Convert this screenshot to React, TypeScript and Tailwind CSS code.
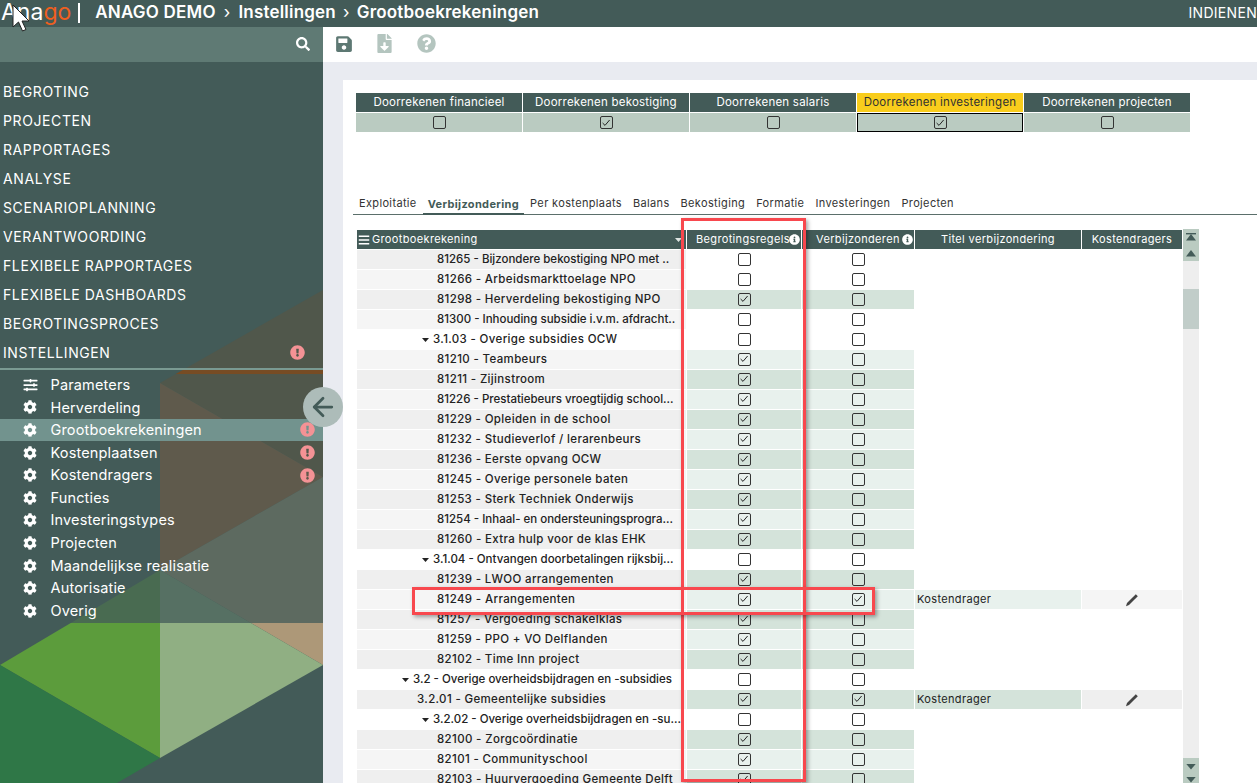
import React from "react";
import { ArrowLeft } from "lucide-react";
import {
  FaBars,
  FaCog,
  FaExclamationCircle,
  FaFileDownload,
  FaInfoCircle,
  FaQuestionCircle,
  FaSave,
  FaSearch,
  FaSlidersH,
} from "react-icons/fa";

const mainNav = [
  "BEGROTING",
  "PROJECTEN",
  "RAPPORTAGES",
  "ANALYSE",
  "SCENARIOPLANNING",
  "VERANTWOORDING",
  "FLEXIBELE RAPPORTAGES",
  "FLEXIBELE DASHBOARDS",
  "BEGROTINGSPROCES",
];

const subNav = [
  { label: "Parameters", sliders: true },
  { label: "Herverdeling" },
  { label: "Grootboekrekeningen", active: true, alert: true },
  { label: "Kostenplaatsen", alert: true },
  { label: "Kostendragers", alert: true },
  { label: "Functies" },
  { label: "Investeringstypes" },
  { label: "Projecten" },
  { label: "Maandelijkse realisatie" },
  { label: "Autorisatie" },
  { label: "Overig" },
];

const calcTabs = [
  { label: "Doorrekenen financieel", checked: false },
  { label: "Doorrekenen bekostiging", checked: true },
  { label: "Doorrekenen salaris", checked: false },
  { label: "Doorrekenen investeringen", checked: true, selected: true },
  { label: "Doorrekenen projecten", checked: false },
];

const tabs = [
  "Exploitatie",
  "Verbijzondering",
  "Per kostenplaats",
  "Balans",
  "Bekostiging",
  "Formatie",
  "Investeringen",
  "Projecten",
];

type Row = {
  label: string;
  indent: string;
  checked?: boolean;
  special?: boolean;
  section?: boolean;
  tight?: boolean;
};

const leaf = "pl-[80px]";

const rows: Row[] = [
  { label: "81265 - Bijzondere bekostiging NPO met ..", indent: leaf, tight: true },
  { label: "81266 - Arbeidsmarkttoelage NPO", indent: leaf },
  { label: "81298 - Herverdeling bekostiging NPO", indent: leaf, checked: true },
  { label: "81300 - Inhouding subsidie i.v.m. afdracht..", indent: leaf, tight: true },
  { label: "3.1.03 - Overige subsidies OCW", indent: "pl-[65px]", section: true },
  { label: "81210 - Teambeurs", indent: leaf, checked: true },
  { label: "81211 - Zijinstroom", indent: leaf, checked: true },
  { label: "81226 - Prestatiebeurs vroegtijdig school...", indent: leaf, checked: true, tight: true },
  { label: "81229 - Opleiden in de school", indent: leaf, checked: true },
  { label: "81232 - Studieverlof / lerarenbeurs", indent: leaf, checked: true },
  { label: "81236 - Eerste opvang OCW", indent: leaf, checked: true },
  { label: "81245 - Overige personele baten", indent: leaf, checked: true },
  { label: "81253 - Sterk Techniek Onderwijs", indent: leaf, checked: true },
  { label: "81254 - Inhaal- en ondersteuningsprogra...", indent: leaf, checked: true, tight: true },
  { label: "81260 - Extra hulp voor de klas EHK", indent: leaf, checked: true },
  { label: "3.1.04 - Ontvangen doorbetalingen rijksbij...", indent: "pl-[65px]", section: true, tight: true },
  { label: "81239 - LWOO arrangementen", indent: leaf, checked: true },
  { label: "81249 - Arrangementen", indent: leaf, checked: true, special: true },
  { label: "81257 - Vergoeding schakelklas", indent: leaf, checked: true },
  { label: "81259 - PPO + VO Delflanden", indent: leaf, checked: true },
  { label: "82102 - Time Inn project", indent: leaf, checked: true },
  { label: "3.2 - Overige overheidsbijdragen en -subsidies", indent: "pl-[45px]", section: true, tight: true },
  { label: "3.2.01 - Gemeentelijke subsidies", indent: "pl-[60px]", checked: true, special: true },
  { label: "3.2.02 - Overige overheidsbijdragen en -su...", indent: "pl-[65px]", section: true, tight: true },
  { label: "82100 - Zorgcoördinatie", indent: leaf, checked: true },
  { label: "82101 - Communityschool", indent: leaf, checked: true },
  { label: "82103 - Huurvergoeding Gemeente Delft", indent: leaf, checked: true },
];

const Checkbox = ({ checked }: { checked?: boolean }) => (
  <span className="flex h-[13px] w-[13px] items-center justify-center rounded-[2px] border-[1.5px] border-[#333]">
    {checked && (
      <svg viewBox="0 0 10 10" className="h-[10px] w-[10px] shrink-0">
        <path d="M1.6 5 L4 7.4 L8.6 2" fill="none" stroke="#222" strokeWidth="1" />
      </svg>
    )}
  </span>
);

const Caret = () => (
  <svg viewBox="0 0 7 4" className="mr-[4px] h-[4px] w-[7px] shrink-0">
    <path d="M0 0 H7 L3.5 4 Z" fill="#222" />
  </svg>
);

const Pencil = () => (
  <svg viewBox="0 0 14 14" className="h-[14px] w-[14px]">
    <path d="M1 13.2 L2 10 L10.8 1.2 L12.8 3.2 L4 12 Z" fill="#444" />
  </svg>
);

const Triangle = ({ down, bar }: { down?: boolean; bar?: boolean }) => (
  <svg viewBox="0 0 10 8" className="h-[8px] w-[10px]">
    {bar && <rect x="0" y="0" width="10" height="1.4" fill="#435b58" />}
    <path d={down ? "M0 1 H10 L5 7 Z" : "M5 1 L10 7.5 H0 Z"} fill="#435b58" />
  </svg>
);

const Sidebar = () => (
  <aside className="relative flex w-[323px] shrink-0 flex-col overflow-hidden bg-[#435b58] text-white">
    <svg viewBox="0 27 323 756" className="absolute inset-0 h-full w-full">
      <path d="M323 290 L160 383 L323 477 Z" fill="#774c24" />
      <path d="M160 383 L323 477 L160 570 Z" fill="#b45828" />
      <path d="M323 477 L160 570 L323 665 Z" fill="#ad9878" />
      <path d="M160 570 L0 665 L160 758 Z" fill="#5c9c3c" />
      <path d="M160 570 L323 665 L160 758 Z" fill="#90af83" />
      <path d="M0 665 L160 758 L117 783 L0 783 Z" fill="#2f7747" />
      <rect x="0" y="27" width="323" height="343" fill="#435b58" fillOpacity="0.75" />
      <rect x="0" y="374" width="323" height="249" fill="#435b58" fillOpacity="0.75" />
    </svg>

    <div className="relative flex h-[35px] shrink-0 items-center justify-end bg-[#5f7a74] pb-[1px] pr-[13px]">
      <FaSearch className="h-[14px] w-[14px]" />
    </div>

    <nav className="relative pt-[15px]">
      {mainNav.map((item) => (
        <div key={item} className="flex h-[29px] items-center pl-[3px] text-[14px] tracking-[0.6px]">
          {item}
        </div>
      ))}
      <div className="flex h-[29px] items-center justify-between pl-[3px] pr-[18px] text-[14px] tracking-[0.6px]">
        INSTELLINGEN
        <FaExclamationCircle className="h-[15px] w-[15px] text-[#f49295]" />
      </div>
      <div className="mt-px h-[2px] bg-[#7a9a92]" />
      <ul className="pt-[3.5px]">
        {subNav.map((item) => (
          <li
            key={item.label}
            className={`flex h-[22.6px] items-center pl-[23px] pr-[8px] text-[14.5px] tracking-[0.15px] ${
              item.active ? "bg-[#72938e]" : ""
            }`}
          >
            <span className="flex w-[27.5px] shrink-0">
              {item.sliders ? (
                <FaSlidersH className="h-[14px] w-[15px]" />
              ) : (
                <FaCog className="h-[14px] w-[14px]" />
              )}
            </span>
            <span className="flex-1">{item.label}</span>
            {item.alert && <FaExclamationCircle className="h-[15px] w-[15px] text-[#f49295]" />}
          </li>
        ))}
      </ul>
    </nav>
  </aside>
);

const DataTable = () => (
  <div className="mt-[15px] flex items-start pl-[1px]">
    <div className="grid grid-cols-[329px_114px_112px_166px_100px] gap-x-px gap-y-px text-[11px] tracking-[0.35px] text-[#222]">
      <div className="flex h-[19px] items-center bg-[#435b58] text-white">
        <FaBars className="ml-[1px] mr-[2px] h-[12px] w-[12px]" />
        <span className="flex-1">Grootboekrekening</span>
        <svg viewBox="0 0 7 4" className="mr-[4px] h-[4px] w-[7px]">
          <path d="M0 0 H7 L3.5 4 Z" fill="#dfe6e3" />
        </svg>
      </div>
      <div className="relative flex h-[19px] items-center bg-[#435b58] pl-[9px] text-white">
        Begrotingsregels
        <FaInfoCircle className="absolute right-[1px] h-[11px] w-[11px]" />
      </div>
      <div className="relative flex h-[19px] items-center bg-[#435b58] pl-[14px] text-white">
        Verbijzonderen
        <FaInfoCircle className="absolute right-[1px] h-[11px] w-[11px]" />
      </div>
      <div className="flex h-[19px] items-center justify-center bg-[#435b58] text-white">
        Titel verbijzondering
      </div>
      <div className="flex h-[19px] items-center justify-center bg-[#435b58] text-white">
        Kostendragers
      </div>

      {rows.map((row, i) => {
        const even = i % 2 === 0;
        const tint = row.checked ? (even ? "bg-[#d4e3da]" : "bg-[#e8f1ed]") : "bg-white";
        const labelBg = row.section ? "bg-white" : even ? "bg-[#efefef]" : "bg-[#f5f5f5]";
        return (
          <React.Fragment key={row.label}>
            <div
              className={`flex h-[19px] items-center overflow-hidden whitespace-nowrap text-[11.5px] font-medium ${
                row.tight ? "tracking-[0px]" : ""
              } ${row.indent} ${labelBg}`}
            >
              {row.section && <Caret />}
              {row.label}
            </div>
            <div className={`flex h-[19px] items-center justify-center pb-[1px] ${tint}`}>
              <Checkbox checked={row.checked} />
            </div>
            <div className={`flex h-[19px] items-center justify-center pb-[1px] ${tint}`}>
              <Checkbox checked={row.special} />
            </div>
            {row.special ? (
              <>
                <div className={`flex h-[19px] items-center pl-[2px] ${tint}`}>Kostendrager</div>
                <div className={`flex h-[19px] items-center justify-center ${even ? "bg-[#efefef]" : "bg-[#f5f5f5]"}`}>
                  <Pencil />
                </div>
              </>
            ) : (
              <>
                <div className="h-[19px]" />
                <div className="h-[19px]" />
              </>
            )}
          </React.Fragment>
        );
      })}
    </div>

    <div className="-mt-px ml-px flex h-[554px] w-[16px] shrink-0 flex-col bg-[#eeeeee]">
      <div className="flex h-[32px] shrink-0 flex-col items-center gap-[8px] bg-[#bacbc1] pt-[4px]">
        <Triangle bar />
        <Triangle />
      </div>
      <div className="mt-[28px] h-[40px] shrink-0 bg-[#c1cdc9]" />
      <div className="mt-auto flex h-[25px] shrink-0 flex-col items-center gap-[5px] bg-[#bacbc1] pt-[5px]">
        <Triangle down />
        <Triangle down />
      </div>
    </div>
  </div>
);

export default function App() {
  return (
    <div className="relative flex h-[783px] w-[1257px] flex-col overflow-hidden bg-white [font-family:Inter,'Liberation_Sans',sans-serif]">
      <header className="flex h-[27px] shrink-0 items-center bg-[#435b58] pb-[2px] text-white">
        <span className="pl-[1px] text-[23px] leading-[25px]">
          Ana<span className="text-[#ef5f1f]">go</span>
        </span>
        <span className="ml-[7px] h-[20px] w-[2px] bg-white" />
        <span className="ml-[15px] flex-1 whitespace-nowrap text-[17px] font-semibold tracking-[0.2px]">
          ANAGO DEMO
          <span className="mx-[8px] font-normal">›</span>
          Instellingen
          <span className="mx-[7px] font-normal">›</span>
          Grootboekrekeningen
        </span>
        <span className="whitespace-nowrap text-[14px] tracking-[0.3px]">INDIENEN</span>
      </header>

      <div className="flex min-h-0 flex-1">
        <Sidebar />

        <main className="flex min-w-0 flex-1 flex-col bg-[#e9ebf1]">
          <div className="flex h-[35px] shrink-0 items-center bg-white pb-[2px] pl-[12px]">
            <FaSave className="h-[18px] w-[18px] text-[#5d7873]" />
            <FaFileDownload className="ml-[24px] h-[19px] w-[15px] text-[#b4c5bf]" />
            <FaQuestionCircle className="ml-[25px] h-[19px] w-[19px] text-[#b4c5bf]" />
          </div>

          <section className="ml-[20px] mt-[18px] min-h-0 flex-1 overflow-hidden bg-white pl-[13px] pt-[13px]">
            <div className="grid w-[834px] grid-cols-5 gap-x-px gap-y-px text-[11.5px] tracking-[0.22px]">
              {calcTabs.map((t) => (
                <div
                  key={t.label}
                  className={`flex h-[19px] items-center justify-center ${
                    t.selected ? "bg-[#f9cd1c] text-[#333]" : "bg-[#435b58] text-white"
                  }`}
                >
                  {t.label}
                </div>
              ))}
              {calcTabs.map((t) => (
                <div
                  key={t.label}
                  className={`flex h-[19px] items-center justify-center bg-[#bacbc1] ${
                    t.selected ? "border-[1.5px] border-black" : ""
                  }`}
                >
                  <Checkbox checked={t.checked} />
                </div>
              ))}
            </div>

            <div className="-ml-[3px] mt-[62px] flex h-[21px] gap-[1px] border-b border-[#5b6f6b] pl-[1px] text-[11px] tracking-[0.35px] text-[#333]">
              {tabs.map((t) => (
                <span
                  key={t}
                  className={
                    t === "Verbijzondering"
                      ? "-mb-px flex h-[21px] items-center border-b-2 border-[#435b58] px-[5px] pt-[1px] font-bold text-[#435b58]"
                      : "flex h-[20px] items-center px-[5px] pb-[1px]"
                  }
                >
                  {t}
                </span>
              ))}
            </div>

            <DataTable />
          </section>
        </main>
      </div>

      {/* collapse button on the sidebar edge */}
      <button className="absolute left-[303px] top-[387px] flex h-[40px] w-[40px] items-center justify-center rounded-full bg-[#adbcb9] text-[#435b58]">
        <ArrowLeft size={30} strokeWidth={2.2} />
      </button>

      {/* red annotation boxes drawn over the screenshot */}
      <div className="absolute left-[681px] top-[218px] h-[564px] w-[125px] border-[3.5px] border-[#f8484e] shadow-[2px_2px_4px_rgba(0,0,0,0.35)]" />
      <div className="absolute left-[412px] top-[587px] h-[28px] w-[463px] border-[3.5px] border-[#f8484e] shadow-[2px_2px_4px_rgba(0,0,0,0.35)]" />

      <svg viewBox="0 0 18 28" className="absolute left-[12px] top-[4px] h-[28px] w-[18px]">
        <path d="M1 1 V23 L6.5 18 L10.5 27 L14 25.5 L10 17 H17 Z" fill="#fff" stroke="#222" strokeWidth="1" />
      </svg>
    </div>
  );
}
